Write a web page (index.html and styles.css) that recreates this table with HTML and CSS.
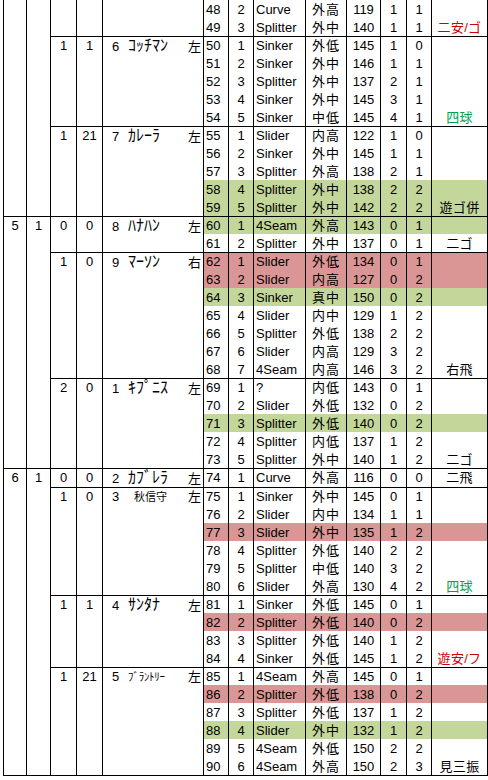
FILE: index.html
```html
<!DOCTYPE html>
<html lang="ja">
<head>
<meta charset="utf-8">
<link rel="stylesheet" href="styles.css">
</head>
<body>
<table class="sheet">
<colgroup>
<col class="w23"><col class="w24"><col class="w26"><col class="w26"><col class="w101"><col class="w25"><col class="w25"><col class="w52"><col class="w41"><col class="w34"><col class="w26"><col class="w25"><col class="w57">
</colgroup>
<tbody>
<tr><td class="L" rowspan="12"></td><td class="L" rowspan="12"></td><td class="L" rowspan="2"></td><td class="L" rowspan="2"></td><td class="L" rowspan="2"></td>
<td class="n">48</td><td class="c">2</td><td class="t">Curve</td><td class="loc">外高</td><td class="c">119</td><td class="c">1</td><td class="c">1</td><td class="res"></td></tr>
<tr><td class="n">49</td><td class="c">3</td><td class="t">Splitter</td><td class="loc">外中</td><td class="c">140</td><td class="c">1</td><td class="c">1</td><td class="res red">二安/ゴ</td></tr>

<tr class="b"><td class="L c" rowspan="5">1</td><td class="L c" rowspan="5">1</td><td class="L bat" rowspan="5"><div class="bw"><span class="num">6</span><span class="nm">ｺｯﾁﾏﾝ</span><span class="hd">左</span></div></td>
<td class="n">50</td><td class="c">1</td><td class="t">Sinker</td><td class="loc">外低</td><td class="c">145</td><td class="c">1</td><td class="c">0</td><td class="res"></td></tr>
<tr><td class="n">51</td><td class="c">2</td><td class="t">Sinker</td><td class="loc">外中</td><td class="c">146</td><td class="c">1</td><td class="c">1</td><td class="res"></td></tr>
<tr><td class="n">52</td><td class="c">3</td><td class="t">Splitter</td><td class="loc">外中</td><td class="c">137</td><td class="c">2</td><td class="c">1</td><td class="res"></td></tr>
<tr><td class="n">53</td><td class="c">4</td><td class="t">Sinker</td><td class="loc">外中</td><td class="c">145</td><td class="c">3</td><td class="c">1</td><td class="res"></td></tr>
<tr><td class="n">54</td><td class="c">5</td><td class="t">Sinker</td><td class="loc">中低</td><td class="c">145</td><td class="c">4</td><td class="c">1</td><td class="res grn">四球</td></tr>

<tr class="b"><td class="L c" rowspan="5">1</td><td class="L c" rowspan="5">21</td><td class="L bat" rowspan="5"><div class="bw"><span class="num">7</span><span class="nm">ｶﾚｰﾗ</span><span class="hd">左</span></div></td>
<td class="n">55</td><td class="c">1</td><td class="t">Slider</td><td class="loc">内高</td><td class="c">122</td><td class="c">1</td><td class="c">0</td><td class="res"></td></tr>
<tr><td class="n">56</td><td class="c">2</td><td class="t">Sinker</td><td class="loc">外中</td><td class="c">145</td><td class="c">1</td><td class="c">1</td><td class="res"></td></tr>
<tr><td class="n">57</td><td class="c">3</td><td class="t">Splitter</td><td class="loc">外高</td><td class="c">138</td><td class="c">2</td><td class="c">1</td><td class="res"></td></tr>
<tr class="g"><td class="n">58</td><td class="c">4</td><td class="t">Splitter</td><td class="loc">外中</td><td class="c">138</td><td class="c">2</td><td class="c">2</td><td class="res"></td></tr>
<tr class="g"><td class="n">59</td><td class="c">5</td><td class="t">Splitter</td><td class="loc">外中</td><td class="c">142</td><td class="c">2</td><td class="c">2</td><td class="res">遊ゴ併</td></tr>

<tr class="b g"><td class="L c" rowspan="14">5</td><td class="L c" rowspan="14">1</td><td class="L c" rowspan="2">0</td><td class="L c" rowspan="2">0</td><td class="L bat" rowspan="2"><div class="bw"><span class="num">8</span><span class="nm">ﾊﾅﾊﾝ</span><span class="hd">左</span></div></td>
<td class="n">60</td><td class="c">1</td><td class="t">4Seam</td><td class="loc">外高</td><td class="c">143</td><td class="c">0</td><td class="c">1</td><td class="res"></td></tr>
<tr><td class="n">61</td><td class="c">2</td><td class="t">Splitter</td><td class="loc">外中</td><td class="c">137</td><td class="c">0</td><td class="c">1</td><td class="res">二ゴ</td></tr>

<tr class="b r"><td class="L c" rowspan="7">1</td><td class="L c" rowspan="7">0</td><td class="L bat" rowspan="7"><div class="bw"><span class="num">9</span><span class="nm">ﾏｰｿﾝ</span><span class="hd">右</span></div></td>
<td class="n">62</td><td class="c">1</td><td class="t">Slider</td><td class="loc">外低</td><td class="c">134</td><td class="c">0</td><td class="c">1</td><td class="res"></td></tr>
<tr class="r"><td class="n">63</td><td class="c">2</td><td class="t">Slider</td><td class="loc">内高</td><td class="c">127</td><td class="c">0</td><td class="c">2</td><td class="res"></td></tr>
<tr class="g"><td class="n">64</td><td class="c">3</td><td class="t">Sinker</td><td class="loc">真中</td><td class="c">150</td><td class="c">0</td><td class="c">2</td><td class="res"></td></tr>
<tr><td class="n">65</td><td class="c">4</td><td class="t">Slider</td><td class="loc">内中</td><td class="c">129</td><td class="c">1</td><td class="c">2</td><td class="res"></td></tr>
<tr><td class="n">66</td><td class="c">5</td><td class="t">Splitter</td><td class="loc">外低</td><td class="c">138</td><td class="c">2</td><td class="c">2</td><td class="res"></td></tr>
<tr><td class="n">67</td><td class="c">6</td><td class="t">Slider</td><td class="loc">内高</td><td class="c">129</td><td class="c">3</td><td class="c">2</td><td class="res"></td></tr>
<tr><td class="n">68</td><td class="c">7</td><td class="t">4Seam</td><td class="loc">内高</td><td class="c">146</td><td class="c">3</td><td class="c">2</td><td class="res">右飛</td></tr>

<tr class="b"><td class="L c" rowspan="5">2</td><td class="L c" rowspan="5">0</td><td class="L bat" rowspan="5"><div class="bw"><span class="num">1</span><span class="nm">ｷﾌﾟﾆｽ</span><span class="hd">左</span></div></td>
<td class="n">69</td><td class="c">1</td><td class="t">?</td><td class="loc">内低</td><td class="c">143</td><td class="c">0</td><td class="c">1</td><td class="res"></td></tr>
<tr><td class="n">70</td><td class="c">2</td><td class="t">Slider</td><td class="loc">外低</td><td class="c">132</td><td class="c">0</td><td class="c">2</td><td class="res"></td></tr>
<tr class="g"><td class="n">71</td><td class="c">3</td><td class="t">Splitter</td><td class="loc">外低</td><td class="c">140</td><td class="c">0</td><td class="c">2</td><td class="res"></td></tr>
<tr><td class="n">72</td><td class="c">4</td><td class="t">Splitter</td><td class="loc">内低</td><td class="c">137</td><td class="c">1</td><td class="c">2</td><td class="res"></td></tr>
<tr><td class="n">73</td><td class="c">5</td><td class="t">Splitter</td><td class="loc">外中</td><td class="c">140</td><td class="c">1</td><td class="c">2</td><td class="res">二ゴ</td></tr>

<tr class="b"><td class="L c" rowspan="17">6</td><td class="L c" rowspan="17">1</td><td class="L c">0</td><td class="L c">0</td><td class="L bat"><div class="bw"><span class="num">2</span><span class="nm">ｶﾌﾞﾚﾗ</span><span class="hd">左</span></div></td>
<td class="n">74</td><td class="c">1</td><td class="t">Curve</td><td class="loc">外高</td><td class="c">116</td><td class="c">0</td><td class="c">0</td><td class="res">二飛</td></tr>

<tr class="b"><td class="L c" rowspan="6">1</td><td class="L c" rowspan="6">0</td><td class="L bat" rowspan="6"><div class="bw"><span class="num">3</span><span class="nm kj">秋信守</span><span class="hd">左</span></div></td>
<td class="n">75</td><td class="c">1</td><td class="t">Sinker</td><td class="loc">外中</td><td class="c">145</td><td class="c">0</td><td class="c">1</td><td class="res"></td></tr>
<tr><td class="n">76</td><td class="c">2</td><td class="t">Slider</td><td class="loc">内中</td><td class="c">134</td><td class="c">1</td><td class="c">1</td><td class="res"></td></tr>
<tr class="r"><td class="n">77</td><td class="c">3</td><td class="t">Slider</td><td class="loc">外中</td><td class="c">135</td><td class="c">1</td><td class="c">2</td><td class="res"></td></tr>
<tr><td class="n">78</td><td class="c">4</td><td class="t">Splitter</td><td class="loc">外低</td><td class="c">140</td><td class="c">2</td><td class="c">2</td><td class="res"></td></tr>
<tr><td class="n">79</td><td class="c">5</td><td class="t">Splitter</td><td class="loc">中低</td><td class="c">140</td><td class="c">3</td><td class="c">2</td><td class="res"></td></tr>
<tr><td class="n">80</td><td class="c">6</td><td class="t">Slider</td><td class="loc">外高</td><td class="c">130</td><td class="c">4</td><td class="c">2</td><td class="res grn">四球</td></tr>

<tr class="b"><td class="L c" rowspan="4">1</td><td class="L c" rowspan="4">1</td><td class="L bat" rowspan="4"><div class="bw"><span class="num">4</span><span class="nm">ｻﾝﾀﾅ</span><span class="hd">左</span></div></td>
<td class="n">81</td><td class="c">1</td><td class="t">Sinker</td><td class="loc">外低</td><td class="c">145</td><td class="c">0</td><td class="c">1</td><td class="res"></td></tr>
<tr class="r"><td class="n">82</td><td class="c">2</td><td class="t">Splitter</td><td class="loc">外低</td><td class="c">140</td><td class="c">0</td><td class="c">2</td><td class="res"></td></tr>
<tr><td class="n">83</td><td class="c">3</td><td class="t">Splitter</td><td class="loc">外低</td><td class="c">140</td><td class="c">1</td><td class="c">2</td><td class="res"></td></tr>
<tr><td class="n">84</td><td class="c">4</td><td class="t">Sinker</td><td class="loc">外低</td><td class="c">145</td><td class="c">1</td><td class="c">2</td><td class="res red">遊安/フ</td></tr>

<tr class="b"><td class="L c" rowspan="6">1</td><td class="L c" rowspan="6">21</td><td class="L bat" rowspan="6"><div class="bw"><span class="num">5</span><span class="nm sm">ﾌﾞﾗﾝﾄﾘｰ</span><span class="hd">左</span></div></td>
<td class="n">85</td><td class="c">1</td><td class="t">4Seam</td><td class="loc">外高</td><td class="c">145</td><td class="c">0</td><td class="c">1</td><td class="res"></td></tr>
<tr class="r"><td class="n">86</td><td class="c">2</td><td class="t">Splitter</td><td class="loc">外低</td><td class="c">138</td><td class="c">0</td><td class="c">2</td><td class="res"></td></tr>
<tr><td class="n">87</td><td class="c">3</td><td class="t">Splitter</td><td class="loc">外低</td><td class="c">137</td><td class="c">1</td><td class="c">2</td><td class="res"></td></tr>
<tr class="g"><td class="n">88</td><td class="c">4</td><td class="t">Slider</td><td class="loc">外中</td><td class="c">132</td><td class="c">1</td><td class="c">2</td><td class="res"></td></tr>
<tr><td class="n">89</td><td class="c">5</td><td class="t">4Seam</td><td class="loc">外低</td><td class="c">150</td><td class="c">2</td><td class="c">2</td><td class="res"></td></tr>
<tr><td class="n">90</td><td class="c">6</td><td class="t">4Seam</td><td class="loc">外高</td><td class="c">150</td><td class="c">2</td><td class="c">3</td><td class="res">見三振</td></tr>
</tbody>
</table>
</body>
</html>
```
FILE: styles.css
```css
html, body {
  margin: 0;
  padding: 0;
  background: #fff;
}
body {
  padding-left: 3px;
}
.sheet {
  border-collapse: separate;
  border-spacing: 0;
  table-layout: fixed;
  width: 485px;
  border-bottom: 1px solid #000;
  font-family: "Liberation Sans", "Noto Sans CJK JP", sans-serif;
  font-size: 13px;
  color: #000;
}
.w23 { width: 23px; }
.w24 { width: 24px; }
.w26 { width: 26px; }
.w101 { width: 101px; }
.w25 { width: 25px; }
.w52 { width: 52px; }
.w41 { width: 41px; }
.w34 { width: 34px; }
.w57 { width: 57px; }

.sheet td {
  padding: 1px 0 0 0;
  border-left: 1px solid #000;
  line-height: 17px;
  vertical-align: top;
  white-space: nowrap;
}
.sheet td.res { border-right: 1px solid #000; }
.sheet tr.b > td {
  border-top: 1px solid #000;
  padding-top: 0;
}

.sheet tr.g > td:not(.L) { background: #c4d79b; }
.sheet tr.r > td:not(.L) { background: #da9694; }

.c { text-align: center; }
.sheet td.n { text-align: left; padding-left: 2px; }
.sheet td.t { text-align: left; padding-left: 2px; }
.loc { text-align: center; letter-spacing: 1px; }
.res { text-align: center; letter-spacing: 0.3px; }
.red { color: #d00000; }
.grn { color: #00a050; }

.bw {
  display: flex;
  align-items: baseline;
  padding: 0 2px 0 9px;
}
.num { width: 16px; }
.nm { font-size: 16px; letter-spacing: 0; }
.nm.kj { font-size: 11px; letter-spacing: 0; padding-left: 6px; }
.nm.sm { font-size: 11px; letter-spacing: -0.3px; }
.hd { margin-left: auto; }
```
